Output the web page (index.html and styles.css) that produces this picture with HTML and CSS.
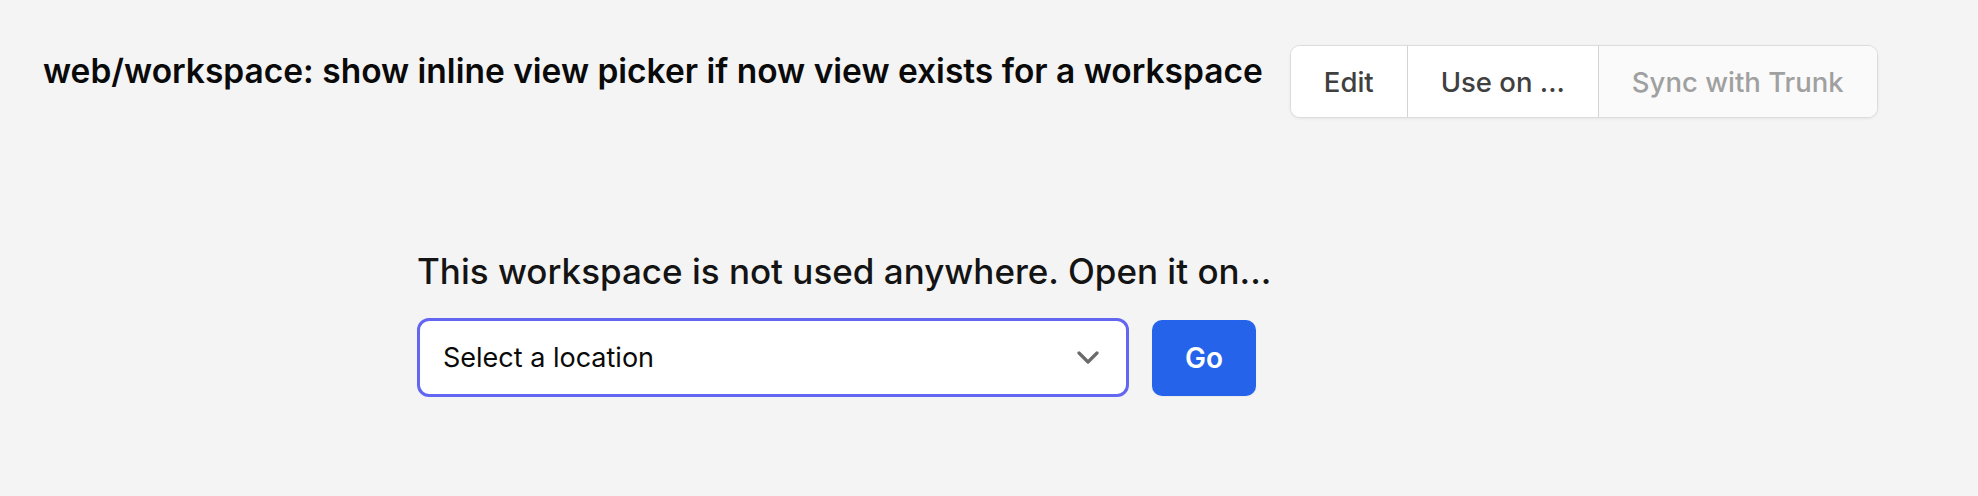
FILE: index.html
```html
<!DOCTYPE html>
<html lang="en">
<head>
<meta charset="utf-8">
<title>Workspace</title>
<link rel="stylesheet" href="styles.css">
</head>
<body>
<div class="page">
  <header class="header">
    <h1 class="title">web/workspace: show inline view picker if now view exists for a workspace</h1>
    <div class="btn-group">
      <button class="seg">Edit</button>
      <button class="seg">Use on ...</button>
      <button class="seg seg-disabled">Sync with Trunk</button>
    </div>
  </header>
  <main class="main">
    <h2 class="prompt">This workspace is not used anywhere. Open it on...</h2>
    <div class="picker">
      <div class="select">
        <span class="select-text">Select a location</span>
        <svg class="chevron" width="22" height="13" viewBox="0 0 22 13" fill="none">
          <path d="M2 2l9 9 9-9" stroke="#6b6b6b" stroke-width="3.2" stroke-linecap="round" stroke-linejoin="round"/>
        </svg>
      </div>
      <button class="go">Go</button>
    </div>
  </main>
</div>
</body>
</html>
```

FILE: styles.css
```css
* { box-sizing: border-box; }
html, body {
  margin: 0;
  padding: 0;
  background: #f4f4f4;
  font-family: Inter, "Noto Sans", sans-serif;
  color: #111;
}
.page {
  padding: 45px 44px 0 43px;
}
.header {
  display: flex;
  align-items: flex-start;
  gap: 27px;
}
.title {
  margin: 6px 0 0 0;
  font-size: 33.5px;
  line-height: 40px;
  font-weight: 600;
  color: #0a0a0a;
  white-space: nowrap;
}
.btn-group {
  display: flex;
  height: 73px;
  border: 1px solid #dcdcdc;
  border-radius: 10px;
  overflow: hidden;
  background: #fff;
  box-shadow: 0 1px 3px rgba(0,0,0,0.06);
  flex-shrink: 0;
}
.seg {
  font-family: inherit;
  font-size: 27.5px;
  font-weight: 500;
  color: #404040;
  background: #fff;
  border: none;
  border-left: 1px solid #d4d4d4;
  padding: 0 33px;
  margin: 0;
  height: 100%;
  white-space: nowrap;
}
.seg:first-child { border-left: none; }
.seg-disabled {
  background: #fafafa;
  color: #a0a0a0;
}
.main {
  padding: 131px 0 0 374px;
}
.prompt {
  margin: 0 0 25px 0;
  font-size: 35px;
  line-height: 44px;
  font-weight: 500;
  color: #141414;
}
.picker {
  display: flex;
  align-items: center;
  gap: 23px;
}
.select {
  width: 712px;
  height: 79px;
  border: 3px solid #6366f1;
  border-radius: 12px;
  background: #fff;
  display: flex;
  align-items: center;
  justify-content: space-between;
  padding: 0 27px 0 23px;
}
.select-text {
  font-size: 27px;
  font-weight: 400;
  color: #0a0a0a;
}
.chevron { display: block; }
.go {
  width: 104px;
  height: 76px;
  border: none;
  border-radius: 10px;
  background: #2563eb;
  color: #fff;
  font-family: inherit;
  font-size: 28px;
  font-weight: 600;
  box-shadow: 0 1px 2px rgba(0,0,0,0.05);
}
```
